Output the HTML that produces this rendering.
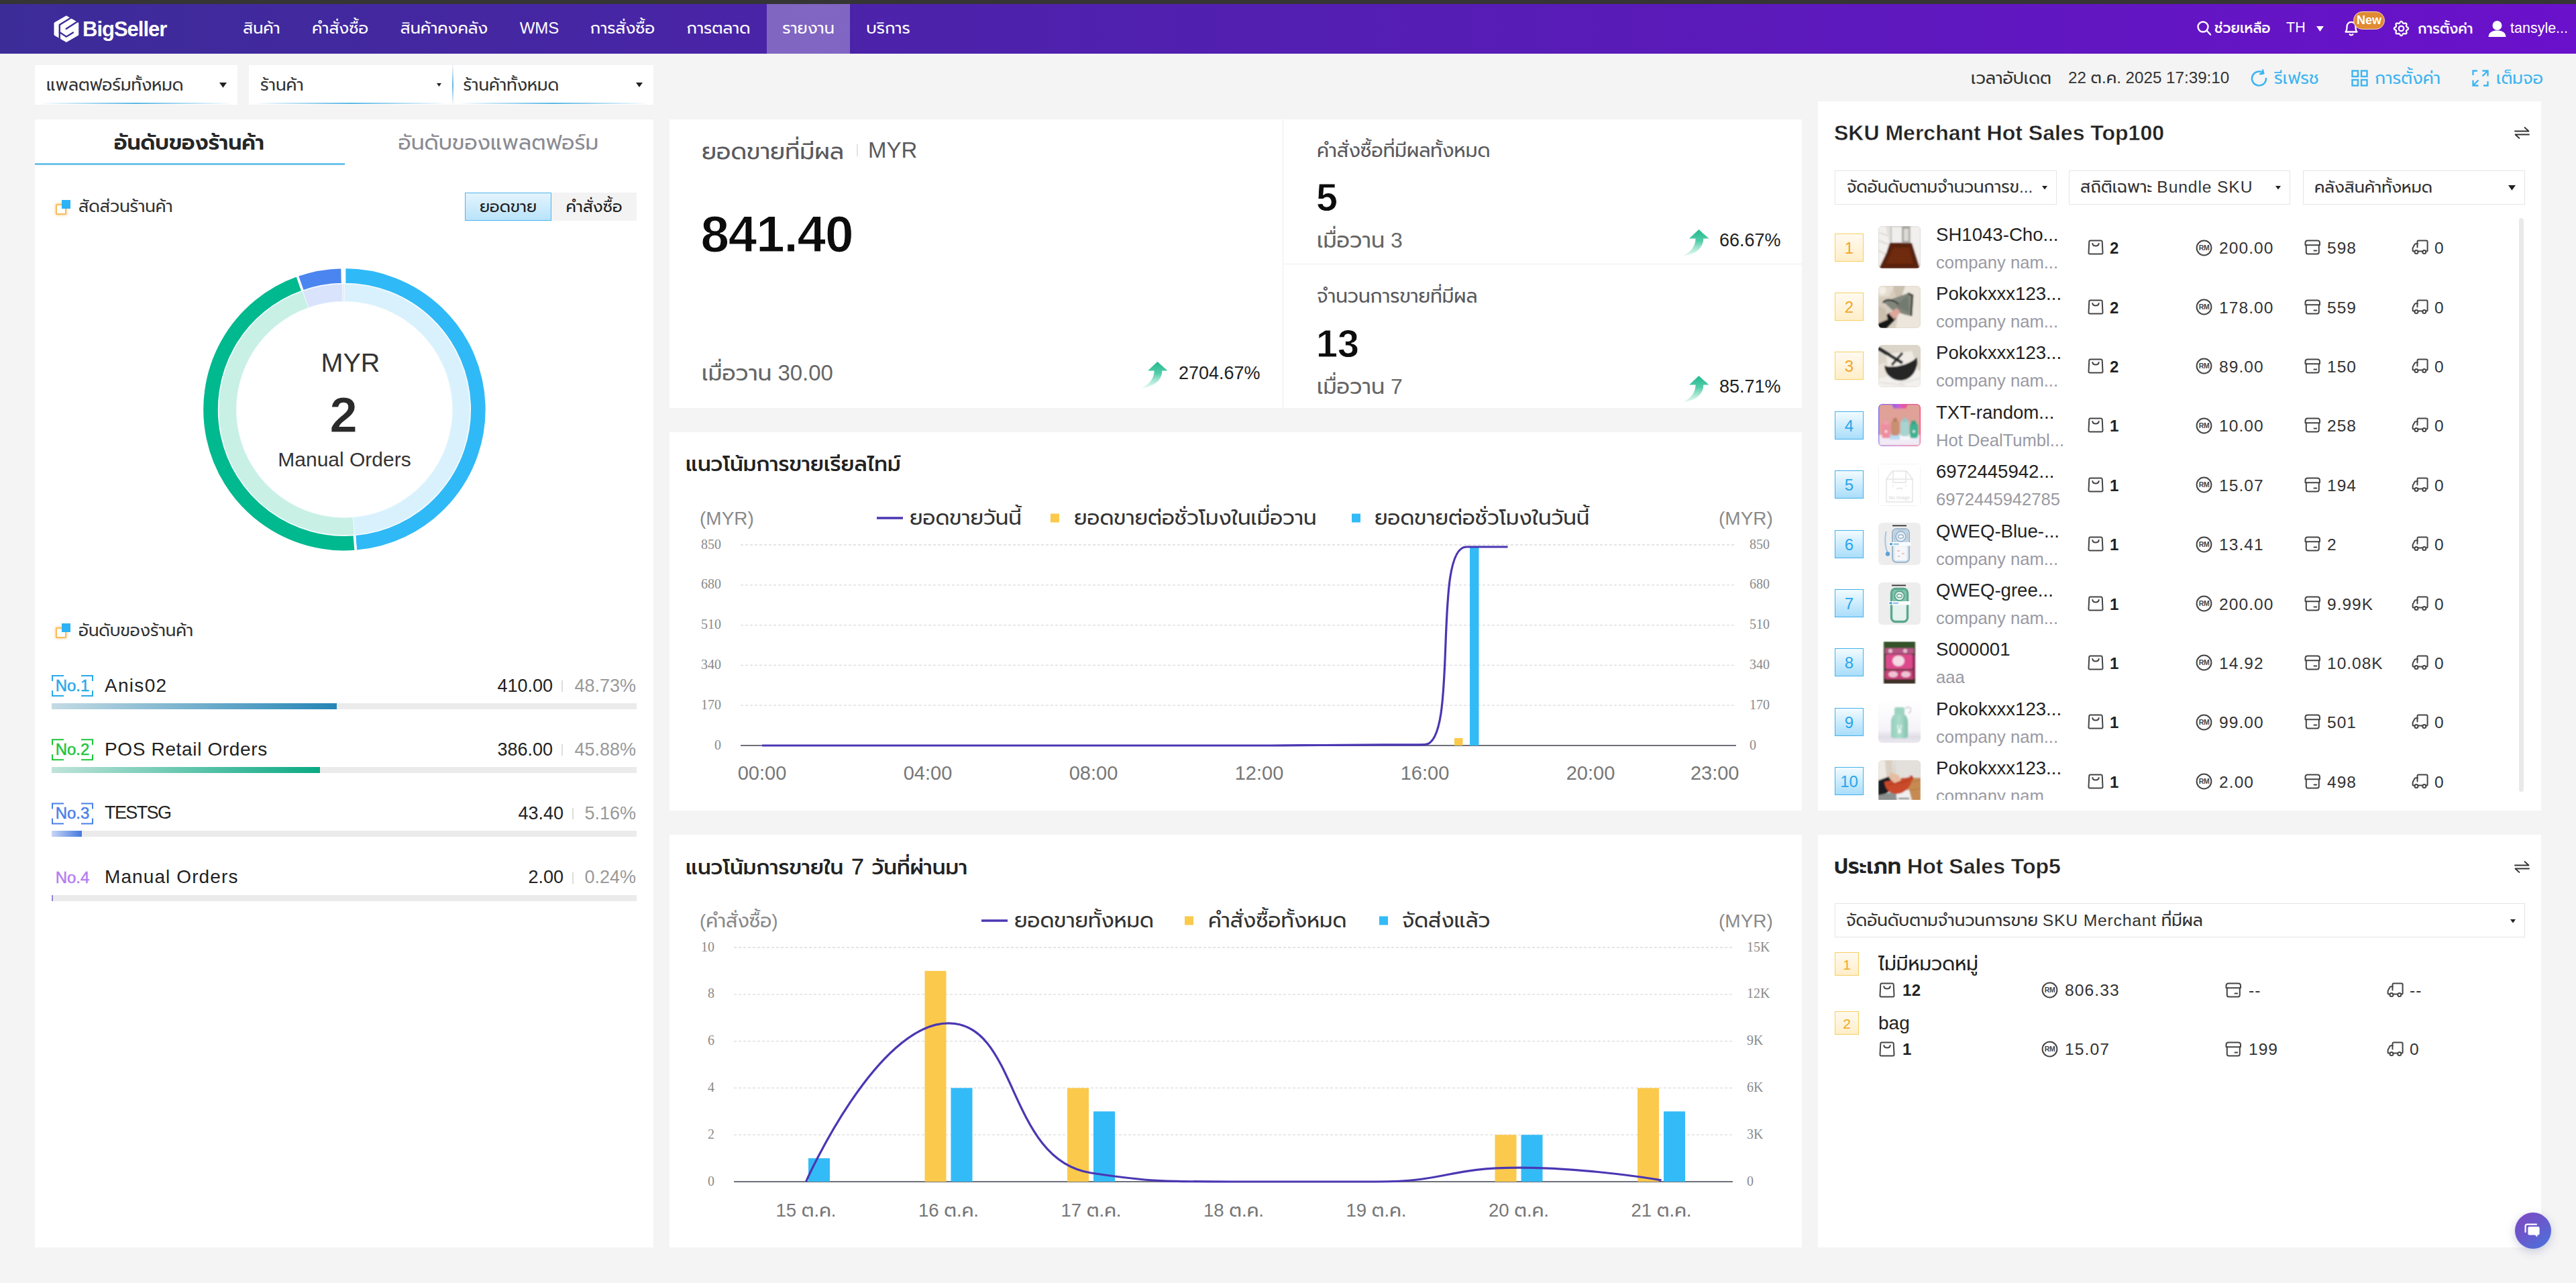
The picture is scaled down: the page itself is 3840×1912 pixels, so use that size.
<!DOCTYPE html><html lang="th"><head><meta charset="utf-8"><title>BigSeller</title><style>
*{box-sizing:border-box;margin:0;padding:0}
html,body{width:3840px;height:1912px;overflow:hidden;background:#f4f4f4}
body{position:relative;font-family:"Liberation Sans","Prompt","Kanit","Noto Sans Thai","Loma",sans-serif;color:#333}
.t{position:absolute;white-space:nowrap}
.b{position:absolute}
svg{position:absolute;overflow:visible}
.ser{font-family:"Liberation Serif","Noto Serif Thai",serif}
</style></head><body>
<div class="b" style="left:0px;top:0px;width:3840px;height:6px;background:#353535"></div>
<div class="b" style="left:0px;top:6px;width:3840px;height:74px;background:linear-gradient(90deg,#3c2c98,#6a11cb)"></div>
<div class="b" style="left:1143px;top:6px;width:124px;height:74px;background:rgba(255,255,255,.3)"></div>
<svg style="left:80px;top:22px" width="38" height="42" viewBox="0 0 38 42"><path d="M18.9 1.8 L36.8 12.1 L36.8 30.2 L18.9 40.5 L1 30.2 L1 12.1 Z" fill="#fff" stroke="#fff" stroke-width="1" stroke-linejoin="round"/><g fill="none" stroke="#3d2c99" stroke-width="2.4" stroke-linecap="round" stroke-linejoin="miter"><path d="M27 3.8 L8.8 15 L8.8 36"/><path d="M38 8.4 L18.6 20.9"/><path d="M8.8 26.1 L18.9 32.7 L29 26.4"/></g></svg>
<div class="t " style="left:123px;top:22px;font-size:31px;line-height:43px;color:#fff;font-weight:700;letter-spacing:-1px;">BigSeller</div>
<div class="t " style="left:390.0px;transform:translateX(-50%);top:25px;font-size:24px;line-height:34px;color:#fff;">สินค้า</div>
<div class="t " style="left:507.0px;transform:translateX(-50%);top:25px;font-size:24px;line-height:34px;color:#fff;">คำสั่งซื้อ</div>
<div class="t " style="left:662.0px;transform:translateX(-50%);top:25px;font-size:24px;line-height:34px;color:#fff;">สินค้าคงคลัง</div>
<div class="t " style="left:804.0px;transform:translateX(-50%);top:25px;font-size:24px;line-height:34px;color:#fff;">WMS</div>
<div class="t " style="left:928.0px;transform:translateX(-50%);top:25px;font-size:24px;line-height:34px;color:#fff;">การสั่งซื้อ</div>
<div class="t " style="left:1071.0px;transform:translateX(-50%);top:25px;font-size:24px;line-height:34px;color:#fff;">การตลาด</div>
<div class="t " style="left:1205.0px;transform:translateX(-50%);top:25px;font-size:24px;line-height:34px;color:#fff;">รายงาน</div>
<div class="t " style="left:1324.0px;transform:translateX(-50%);top:25px;font-size:24px;line-height:34px;color:#fff;">บริการ</div>
<svg style="left:3274px;top:30px" width="24" height="24" viewBox="0 0 24 24" fill="none" stroke="#fff" stroke-width="2.4" stroke-linecap="round"><circle cx="10" cy="10" r="7.5"/><path d="M16 16 L21 21.5"/></svg>
<div class="t " style="left:3301px;top:26.5px;font-size:21px;line-height:29px;color:#fff;font-weight:500;">ช่วยเหลือ</div>
<div class="t " style="left:3408px;top:26px;font-size:21.5px;line-height:30px;color:#fff;">TH</div>
<svg style="left:3453px;top:39px" width="11" height="8" viewBox="0 0 11 8"><path d="M0 0 H11 L5.5 8 Z" fill="#fff"/></svg>
<svg style="left:3493.5px;top:30px" width="22" height="24" viewBox="0 0 22 24" fill="none" stroke="#fff" stroke-width="2.3" stroke-linecap="round" stroke-linejoin="round"><path d="M2.5 17.5 C4.5 15.5 4.5 13.5 4.5 10 C4.5 5.5 7.2 2.8 11 2.8 C14.8 2.8 17.5 5.5 17.5 10 C17.5 13.5 17.5 15.5 19.5 17.5 Z"/><path d="M8.6 21.3 C9.6 22.6 12.4 22.6 13.4 21.3"/></svg>
<div class="b" style="left:3507.5px;top:17px;width:47.5px;height:27px;background:#e08a32;border:1.5px solid #f6dcc0;border-radius:14px"></div>
<div class="t " style="left:3531.5px;transform:translateX(-50%);top:17.5px;font-size:18px;line-height:25px;color:#fff;font-weight:700;">New</div>
<svg style="left:3568px;top:30.5px" width="23" height="23" viewBox="0 0 23 23" fill="none" stroke="#fff" stroke-width="2.3" stroke-linejoin="round"><path d="M11.50 0.85 L12.40 1.18 L13.17 2.03 L13.77 3.02 L14.31 3.77 L14.98 4.05 L15.89 3.90 L17.02 3.62 L18.16 3.57 L19.03 3.97 L19.43 4.84 L19.38 5.98 L19.10 7.11 L18.95 8.02 L19.23 8.69 L19.98 9.23 L20.97 9.83 L21.82 10.60 L22.15 11.50 L21.82 12.40 L20.97 13.17 L19.98 13.77 L19.23 14.31 L18.95 14.98 L19.10 15.89 L19.38 17.02 L19.43 18.16 L19.03 19.03 L18.16 19.43 L17.02 19.38 L15.89 19.10 L14.98 18.95 L14.31 19.23 L13.77 19.98 L13.17 20.97 L12.40 21.82 L11.50 22.15 L10.60 21.82 L9.83 20.97 L9.23 19.98 L8.69 19.23 L8.02 18.95 L7.11 19.10 L5.98 19.38 L4.84 19.43 L3.97 19.03 L3.57 18.16 L3.62 17.02 L3.90 15.89 L4.05 14.98 L3.77 14.31 L3.02 13.77 L2.03 13.17 L1.18 12.40 L0.85 11.50 L1.18 10.60 L2.03 9.83 L3.02 9.23 L3.77 8.69 L4.05 8.02 L3.90 7.11 L3.62 5.98 L3.57 4.84 L3.97 3.97 L4.84 3.57 L5.98 3.62 L7.11 3.90 L8.02 4.05 L8.69 3.77 L9.23 3.02 L9.83 2.03 L10.60 1.18 Z"/><circle cx="11.5" cy="11.5" r="3.7"/></svg>
<div class="t " style="left:3604px;top:27.5px;font-size:20.8px;line-height:29px;color:#fff;font-weight:500;">การตั้งค่า</div>
<svg style="left:3709px;top:30px" width="27" height="26" viewBox="0 0 27 26" fill="#fff"><circle cx="13.5" cy="8" r="7"/><path d="M0.5 25 C1 18 6 15.5 13.5 15.5 C21 15.5 26 18 26.5 25 Z"/></svg>
<div class="t " style="left:3742px;top:27px;font-size:21.5px;line-height:30px;color:#fff;">tansyle...</div>
<div class="b" style="left:52px;top:97px;width:302px;height:59px;background:#fff"></div>
<div class="b" style="left:60px;top:152.6px;width:286px;height:2.4px;background:linear-gradient(90deg,rgba(60,170,225,0),rgba(60,170,225,.85) 50%,rgba(60,170,225,0));border-radius:2px"></div>
<div class="t " style="left:69px;top:108.5px;font-size:24.7px;line-height:35px;color:#333;">แพลตฟอร์มทั้งหมด</div>
<svg style="left:327px;top:122.7px" width="11" height="7.7" viewBox="0 0 10 7"><path d="M0 0 H10 L5 7 Z" fill="#222"/></svg>
<div class="b" style="left:371px;top:97px;width:303px;height:59px;background:#fff"></div>
<div class="b" style="left:379px;top:152.6px;width:287px;height:2.4px;background:linear-gradient(90deg,rgba(60,170,225,0),rgba(60,170,225,.85) 50%,rgba(60,170,225,0));border-radius:2px"></div>
<div class="t " style="left:388px;top:108.5px;font-size:24.7px;line-height:35px;color:#333;">ร้านค้า</div>
<svg style="left:651px;top:123.9px" width="7" height="4.9" viewBox="0 0 10 7"><path d="M0 0 H10 L5 7 Z" fill="#222"/></svg>
<div class="b" style="left:676px;top:97px;width:298px;height:59px;background:#fff"></div>
<div class="b" style="left:684px;top:152.6px;width:282px;height:2.4px;background:linear-gradient(90deg,rgba(60,170,225,0),rgba(60,170,225,.85) 50%,rgba(60,170,225,0));border-radius:2px"></div>
<div class="t " style="left:690.5px;top:108.5px;font-size:24.7px;line-height:35px;color:#333;">ร้านค้าทั้งหมด</div>
<svg style="left:948px;top:123px" width="10" height="7" viewBox="0 0 10 7"><path d="M0 0 H10 L5 7 Z" fill="#222"/></svg>
<div class="b" style="left:674px;top:100px;width:2px;height:54px;background:linear-gradient(180deg,rgba(60,170,225,0),rgba(60,170,225,.8) 50%,rgba(60,170,225,0))"></div>
<div class="t " style="left:2938px;top:98.5px;font-size:25px;line-height:35px;color:#333;">เวลาอัปเดต</div>
<div class="t " style="left:3083px;top:99px;font-size:24.2px;line-height:34px;color:#333;">22 ต.ค. 2025 17:39:10</div>
<svg style="left:3354px;top:103px" width="28" height="28" viewBox="0 0 28 28" fill="none" stroke="#3db4f0" stroke-width="2.6" stroke-linecap="round" stroke-linejoin="round"><path d="M24 14 A10.5 10.5 0 1 1 19.5 5.4"/><path d="M19 1.5 L20.2 6.4 L15.2 7.2" /></svg>
<div class="t " style="left:3390px;top:98.5px;font-size:25px;line-height:35px;color:#3db4f0;">รีเฟรช</div>
<svg style="left:3505px;top:104px" width="25" height="25" viewBox="0 0 25 25" fill="none" stroke="#3db4f0" stroke-width="2.4"><rect x="1.5" y="1.5" width="8.5" height="8.5"/><rect x="15" y="1.5" width="8.5" height="8.5"/><rect x="1.5" y="15" width="8.5" height="8.5"/><rect x="15" y="15" width="8.5" height="8.5"/></svg>
<div class="t " style="left:3540px;top:98.5px;font-size:25px;line-height:35px;color:#3db4f0;">การตั้งค่า</div>
<svg style="left:3685px;top:104px" width="25" height="25" viewBox="0 0 25 25" fill="none" stroke="#3db4f0" stroke-width="2.3" stroke-linecap="butt" stroke-linejoin="miter"><path d="M1.5 8 V1.5 H8"/><path d="M23.5 17 V23.5 H17"/><path d="M15.5 1.5 H23.5 V9.5 M23 2 L15.5 9.5"/><path d="M9.5 23.5 H1.5 V15.5 M2 23 L9.5 15.5"/></svg>
<div class="t " style="left:3721px;top:98.5px;font-size:25px;line-height:35px;color:#3db4f0;">เต็มจอ</div>
<div class="b" style="left:52px;top:178px;width:922px;height:1680.5px;background:#fff"></div>
<div class="t " style="left:282px;transform:translateX(-50%);top:190px;font-size:31.5px;line-height:44px;color:#262626;font-weight:600;">อันดับของร้านค้า</div>
<div class="t " style="left:743px;transform:translateX(-50%);top:190px;font-size:31.5px;line-height:44px;color:#8b8b93;">อันดับของแพลตฟอร์ม</div>
<div class="b" style="left:52px;top:242.5px;width:462px;height:3px;background:#6ec3ea"></div>
<div class="b" style="left:83px;top:304px;width:16px;height:16px;border:2px solid #f8bd5e;border-radius:1px;box-shadow:0 0 4px rgba(250,170,60,.75)"></div>
<div class="b" style="left:92px;top:298px;width:13px;height:13px;background:#2db2f5"></div>
<div class="t " style="left:117px;top:291px;font-size:24.5px;line-height:34px;color:#333;">สัดส่วนร้านค้า</div>
<div class="b" style="left:693px;top:287px;width:129px;height:42px;background:linear-gradient(180deg,#e4f4fd,#b9e3fa);border:1.5px solid #4bb5ec"></div>
<div class="t " style="left:757.5px;transform:translateX(-50%);top:291px;font-size:24px;line-height:34px;color:#222;">ยอดขาย</div>
<div class="b" style="left:822px;top:287px;width:127px;height:42px;background:#f3f3f3"></div>
<div class="t " style="left:885.5px;transform:translateX(-50%);top:291px;font-size:24px;line-height:34px;color:#222;">คำสั่งซื้อ</div>
<svg style="left:0;top:0" width="3840" height="1912"><path d="M513.40 398.30 A212 212 0 0 1 530.29 821.63 L528.28 796.51 A186.8 186.8 0 0 0 513.40 423.50 Z" fill="#30b9f7" stroke="#fff" stroke-width="3.6" stroke-linejoin="miter"/><path d="M530.29 821.63 A212 212 0 0 1 442.98 410.34 L451.35 434.11 A186.8 186.8 0 0 0 528.28 796.51 Z" fill="#00b98f" stroke="#fff" stroke-width="3.6" stroke-linejoin="miter"/><path d="M442.98 410.34 A212 212 0 0 1 510.33 398.32 L510.69 423.52 A186.8 186.8 0 0 0 451.35 434.11 Z" fill="#4b86f0" stroke="#fff" stroke-width="3.6" stroke-linejoin="miter"/><path d="M510.33 398.32 A212 212 0 0 1 513.40 398.30 L513.40 423.50 A186.8 186.8 0 0 0 510.69 423.52 Z" fill="#b58af5" stroke="#fff" stroke-width="3.6" stroke-linejoin="miter"/><path d="M513.40 422.90 A187.4 187.4 0 0 1 528.33 797.10 L526.23 770.79 A161 161 0 0 0 513.40 449.30 Z" fill="#d8f1fd" stroke="#f1fafe" stroke-width="1"/><path d="M528.33 797.10 A187.4 187.4 0 0 1 451.15 433.54 L459.92 458.44 A161 161 0 0 0 526.23 770.79 Z" fill="#c8f0e5" stroke="#f1fafe" stroke-width="1"/><path d="M451.15 433.54 A187.4 187.4 0 0 1 510.69 422.92 L511.07 449.32 A161 161 0 0 0 459.92 458.44 Z" fill="#d9e3fc" stroke="#f1fafe" stroke-width="1"/><path d="M510.69 422.92 A187.4 187.4 0 0 1 513.40 422.90 L513.40 449.30 A161 161 0 0 0 511.07 449.32 Z" fill="#eee4fd" stroke="#f1fafe" stroke-width="1"/></svg>
<div class="t " style="left:522.5px;transform:translateX(-50%);top:512.5px;font-size:39.5px;line-height:55px;color:#333;">MYR</div>
<div class="t " style="left:512px;transform:translateX(-50%);top:565.5px;font-size:75px;line-height:105px;color:#2a2a2a;font-weight:700;-webkit-text-stroke:1px #fff;">2</div>
<div class="t " style="left:513.5px;transform:translateX(-50%);top:664px;font-size:30px;line-height:42px;color:#333;">Manual Orders</div>
<div class="b" style="left:83px;top:935px;width:16px;height:16px;border:2px solid #f8bd5e;border-radius:1px;box-shadow:0 0 4px rgba(250,170,60,.75)"></div>
<div class="b" style="left:92px;top:929px;width:13px;height:13px;background:#2db2f5"></div>
<div class="t " style="left:117px;top:923px;font-size:24.5px;line-height:34px;color:#333;">อันดับของร้านค้า</div>
<svg style="left:0;top:0" width="3840" height="1912"><path d="M78 1015.0 V1007.0 H95 M121 1007.0 H138 V1015.0 M138 1029.0 V1037.0 H121 M95 1037.0 H78 V1029.0" fill="none" stroke="#29a9ea" stroke-width="2"/></svg>
<div class="t " style="left:108px;transform:translateX(-50%);top:1005px;font-size:24px;line-height:34px;color:#29a9ea;-webkit-text-stroke:.5px #29a9ea;">No.1</div>
<div class="t " style="left:156px;top:1001.5px;font-size:28px;line-height:39px;color:#222;letter-spacing:1.3px;">Anis02</div>
<div class="t " style="right:2892px;top:1002.5px;font-size:27px;line-height:38px;color:#999;">48.73%</div>
<div class="b" style="left:837px;top:1014.0px;width:2px;height:17px;background:#ddd"></div>
<div class="t " style="right:3016px;top:1002.5px;font-size:27px;line-height:38px;color:#222;">410.00</div>
<div class="b" style="left:77px;top:1048px;width:872px;height:9px;background:#ebebeb"></div>
<div class="b" style="left:77px;top:1048px;width:425px;height:9px;background:linear-gradient(90deg,#c4dbe4,#2585b6)"></div>
<svg style="left:0;top:0" width="3840" height="1912"><path d="M78 1110.2 V1102.2 H95 M121 1102.2 H138 V1110.2 M138 1124.2 V1132.2 H121 M95 1132.2 H78 V1124.2" fill="none" stroke="#1ec53a" stroke-width="2"/></svg>
<div class="t " style="left:108px;transform:translateX(-50%);top:1100.2px;font-size:24px;line-height:34px;color:#1ec53a;-webkit-text-stroke:.5px #1ec53a;">No.2</div>
<div class="t " style="left:156px;top:1096.7px;font-size:28px;line-height:39px;color:#222;letter-spacing:0.65px;">POS Retail Orders</div>
<div class="t " style="right:2892px;top:1097.7px;font-size:27px;line-height:38px;color:#999;">45.88%</div>
<div class="b" style="left:837px;top:1109.2px;width:2px;height:17px;background:#ddd"></div>
<div class="t " style="right:3016px;top:1097.7px;font-size:27px;line-height:38px;color:#222;">386.00</div>
<div class="b" style="left:77px;top:1143px;width:872px;height:9px;background:#ebebeb"></div>
<div class="b" style="left:77px;top:1143px;width:400px;height:9px;background:linear-gradient(90deg,#bfe3d9,#0aa983)"></div>
<svg style="left:0;top:0" width="3840" height="1912"><path d="M78 1205.4 V1197.4 H95 M121 1197.4 H138 V1205.4 M138 1219.4 V1227.4 H121 M95 1227.4 H78 V1219.4" fill="none" stroke="#4a80e8" stroke-width="2"/></svg>
<div class="t " style="left:108px;transform:translateX(-50%);top:1195.4px;font-size:24px;line-height:34px;color:#4a80e8;-webkit-text-stroke:.5px #4a80e8;">No.3</div>
<div class="t " style="left:156px;top:1192.4px;font-size:27px;line-height:38px;color:#222;letter-spacing:-1.6px;">TESTSG</div>
<div class="t " style="right:2892px;top:1192.9px;font-size:27px;line-height:38px;color:#999;">5.16%</div>
<div class="b" style="left:853px;top:1204.4px;width:2px;height:17px;background:#ddd"></div>
<div class="t " style="right:3000px;top:1192.9px;font-size:27px;line-height:38px;color:#222;">43.40</div>
<div class="b" style="left:77px;top:1238px;width:872px;height:9px;background:#ebebeb"></div>
<div class="b" style="left:77px;top:1238px;width:45px;height:9px;background:linear-gradient(90deg,#c9d6f6,#4379de)"></div>
<div class="t " style="left:108px;transform:translateX(-50%);top:1290.6px;font-size:24px;line-height:34px;color:#b57df2;-webkit-text-stroke:.5px #b57df2;">No.4</div>
<div class="t " style="left:156px;top:1287.1px;font-size:28px;line-height:39px;color:#222;letter-spacing:1.1px;">Manual Orders</div>
<div class="t " style="right:2892px;top:1288.1px;font-size:27px;line-height:38px;color:#999;">0.24%</div>
<div class="b" style="left:853px;top:1299.6px;width:2px;height:17px;background:#ddd"></div>
<div class="t " style="right:3000px;top:1288.1px;font-size:27px;line-height:38px;color:#222;">2.00</div>
<div class="b" style="left:77px;top:1334px;width:872px;height:9px;background:#ebebeb"></div>
<div class="b" style="left:77px;top:1334px;width:1.5px;height:9px;background:#8f86d8"></div>
<div class="b" style="left:998px;top:178px;width:913px;height:430px;background:#fff"></div>
<div class="b" style="left:1914px;top:178px;width:772px;height:214px;background:#fff"></div>
<div class="b" style="left:1914px;top:395px;width:772px;height:213px;background:#fff"></div>
<div class="b" style="left:1911px;top:178px;width:3px;height:430px;background:#f8f8f8"></div>
<div class="b" style="left:1914px;top:392px;width:772px;height:3px;background:#f8f8f8"></div>
<div class="t " style="left:1046px;top:199.5px;font-size:35px;line-height:49px;color:#5a5a5e;">ยอดขายที่มีผล</div>
<div class="b" style="left:1277px;top:215px;width:2px;height:18px;background:#e3e3e3"></div>
<div class="t " style="left:1294px;top:201px;font-size:33px;line-height:46px;color:#5a5a5e;">MYR</div>
<div class="t " style="left:1044.5px;top:295px;font-size:76.5px;line-height:107px;color:#0c0c0c;font-weight:700;letter-spacing:-1.2px;-webkit-text-stroke:1.1px #fff;">841.40</div>
<div class="t " style="left:1046px;top:533px;font-size:33px;line-height:46px;color:#666;">เมื่อวาน 30.00</div>
<svg style="left:1703px;top:539px" width="42" height="42" viewBox="0 0 42 42"><defs><linearGradient id="ga" x1="0" y1="0" x2="0" y2="1"><stop offset="0" stop-color="#22b98f"/><stop offset=".45" stop-color="#55cdaa"/><stop offset="1" stop-color="#c9f1e4" stop-opacity=".55"/></linearGradient></defs><path d="M22.4 0 L37.5 13.6 L29.2 13.6 C29.5 27 18 37.5 -1 39.2 C10 34 17.6 25 17.6 13.6 L8 13.6 Z" fill="url(#ga)"/></svg>
<div class="t " style="left:1757px;top:537px;font-size:27px;line-height:38px;color:#222;">2704.67%</div>
<div class="t " style="left:1963px;top:204.5px;font-size:28.2px;line-height:39px;color:#5a5a5e;">คำสั่งซื้อที่มีผลทั้งหมด</div>
<div class="t " style="left:1962px;top:254px;font-size:57.5px;line-height:80px;color:#0c0c0c;font-weight:700;-webkit-text-stroke:.8px #fff;">5</div>
<div class="t " style="left:1963px;top:335.5px;font-size:32px;line-height:45px;color:#666;">เมื่อวาน 3</div>
<svg style="left:2510px;top:341.5px" width="42" height="42" viewBox="0 0 42 42"><defs><linearGradient id="gb" x1="0" y1="0" x2="0" y2="1"><stop offset="0" stop-color="#22b98f"/><stop offset=".45" stop-color="#55cdaa"/><stop offset="1" stop-color="#c9f1e4" stop-opacity=".55"/></linearGradient></defs><path d="M22.4 0 L37.5 13.6 L29.2 13.6 C29.5 27 18 37.5 -1 39.2 C10 34 17.6 25 17.6 13.6 L8 13.6 Z" fill="url(#gb)"/></svg>
<div class="t " style="left:2563px;top:339px;font-size:27px;line-height:38px;color:#222;">66.67%</div>
<div class="t " style="left:1963px;top:421.5px;font-size:28px;line-height:39px;color:#5a5a5e;">จำนวนการขายที่มีผล</div>
<div class="t " style="left:1962px;top:472px;font-size:57.5px;line-height:80px;color:#0c0c0c;font-weight:700;-webkit-text-stroke:.8px #fff;">13</div>
<div class="t " style="left:1963px;top:553.5px;font-size:32px;line-height:45px;color:#666;">เมื่อวาน 7</div>
<svg style="left:2510px;top:559.5px" width="42" height="42" viewBox="0 0 42 42"><defs><linearGradient id="gc" x1="0" y1="0" x2="0" y2="1"><stop offset="0" stop-color="#22b98f"/><stop offset=".45" stop-color="#55cdaa"/><stop offset="1" stop-color="#c9f1e4" stop-opacity=".55"/></linearGradient></defs><path d="M22.4 0 L37.5 13.6 L29.2 13.6 C29.5 27 18 37.5 -1 39.2 C10 34 17.6 25 17.6 13.6 L8 13.6 Z" fill="url(#gc)"/></svg>
<div class="t " style="left:2563px;top:557px;font-size:27px;line-height:38px;color:#222;">85.71%</div>
<div class="b" style="left:998px;top:644px;width:1688px;height:564px;background:#fff"></div>
<div class="t " style="left:1022px;top:670px;font-size:31px;line-height:43px;color:#222;font-weight:500;">แนวโน้มการขายเรียลไทม์</div>
<svg style="left:0;top:0" width="3840" height="1912"><style>.ax{font-family:'Liberation Serif','Noto Serif Thai',serif;font-size:20px;fill:#8a8a8a}.xl{font-size:29px;fill:#777}.xl2{font-size:27.6px;fill:#777}.un{font-size:28px;fill:#8a8a8a}</style><path d="M1104 812.0 H2588" stroke="#dcdcdc" stroke-width="1.3" stroke-dasharray="4 3"/><text x="1075" y="817.5" text-anchor="end" class="ax">850</text><text x="2608" y="817.5" class="ax">850</text><path d="M1104 871.8 H2588" stroke="#dcdcdc" stroke-width="1.3" stroke-dasharray="4 3"/><text x="1075" y="877.3" text-anchor="end" class="ax">680</text><text x="2608" y="877.3" class="ax">680</text><path d="M1104 931.6 H2588" stroke="#dcdcdc" stroke-width="1.3" stroke-dasharray="4 3"/><text x="1075" y="937.1" text-anchor="end" class="ax">510</text><text x="2608" y="937.1" class="ax">510</text><path d="M1104 991.4 H2588" stroke="#dcdcdc" stroke-width="1.3" stroke-dasharray="4 3"/><text x="1075" y="996.9" text-anchor="end" class="ax">340</text><text x="2608" y="996.9" class="ax">340</text><path d="M1104 1051.2 H2588" stroke="#dcdcdc" stroke-width="1.3" stroke-dasharray="4 3"/><text x="1075" y="1056.7" text-anchor="end" class="ax">170</text><text x="2608" y="1056.7" class="ax">170</text><text x="1075" y="1116.5" text-anchor="end" class="ax">0</text><text x="2608" y="1116.5" class="ax">0</text><path d="M1104 1111 H2588" stroke="#6e7079" stroke-width="2"/><text x="1043" y="782" class="un">(MYR)</text><text x="2562" y="782" class="un">(MYR)</text><path d="M1307 772 H1346" stroke="#4a37b3" stroke-width="3.5" fill="none"/><text x="1356" y="782" font-size="31" fill="#333" class="lg">ยอดขายวันนี้</text><rect x="1566" y="765.5" width="13" height="13" fill="#fbc94c"/><text x="1601" y="782" font-size="31" fill="#333" class="lg">ยอดขายต่อชั่วโมงในเมื่อวาน</text><rect x="2015" y="765.5" width="13" height="13" fill="#33bbf7"/><text x="2049" y="782" font-size="31" fill="#333" class="lg">ยอดขายต่อชั่วโมงในวันนี้</text><text x="1136.0" y="1162" text-anchor="middle" class="xl">00:00</text><text x="1383.0" y="1162" text-anchor="middle" class="xl">04:00</text><text x="1630.0" y="1162" text-anchor="middle" class="xl">08:00</text><text x="1877.0" y="1162" text-anchor="middle" class="xl">12:00</text><text x="2124.0" y="1162" text-anchor="middle" class="xl">16:00</text><text x="2371.0" y="1162" text-anchor="middle" class="xl">20:00</text><text x="2556.2" y="1162" text-anchor="middle" class="xl">23:00</text><rect x="2168" y="1100" width="12.5" height="11" fill="#fbc94c"/><rect x="2191" y="815" width="13.5" height="296" fill="#33bbf7"/><path d="M1136.0 1111.0 C1136.0 1111.0 1166.9 1111.0 1197.8 1111.0 C1228.6 1111.0 1228.6 1111.0 1259.5 1111.0 C1290.4 1111.0 1290.4 1111.0 1321.2 1111.0 C1352.1 1111.0 1352.1 1111.0 1383.0 1111.0 C1413.9 1111.0 1413.9 1111.0 1444.8 1111.0 C1475.6 1111.0 1475.6 1111.0 1506.5 1111.0 C1537.4 1111.0 1537.4 1111.0 1568.2 1111.0 C1599.1 1111.0 1599.1 1111.0 1630.0 1111.0 C1660.9 1111.0 1660.9 1111.0 1691.8 1111.0 C1722.6 1111.0 1722.6 1111.0 1753.5 1111.0 C1784.4 1111.0 1784.4 1111.0 1815.2 1111.0 C1846.1 1111.0 1846.1 1111.0 1877.0 1111.0 C1907.9 1111.0 1907.9 1110.8 1938.8 1110.6 C1969.6 1110.5 1969.6 1110.5 2000.5 1110.3 C2031.4 1110.1 2031.4 1110.1 2062.2 1109.9 C2093.1 1109.8 2113.5 1109.9 2124.0 1109.6 C2175.2 1107.9 2134.5 815.0 2185.8 815.0 C2196.3 815.0 2247.5 815.0 2247.5 815.0" fill="none" stroke="#4a37b3" stroke-width="3.2" stroke-linejoin="round"/></svg>
<div class="b" style="left:998px;top:1244px;width:1688px;height:614.5px;background:#fff"></div>
<div class="t " style="left:1022px;top:1270px;font-size:31px;line-height:43px;color:#222;font-weight:500;">แนวโน้มการขายใน <span style="margin:0 3px;font-size:34px;-webkit-text-stroke:.4px #222">7</span> วันที่ผ่านมา</div>
<svg style="left:0;top:0" width="3840" height="1912"><path d="M1094 1412.0 H2583" stroke="#dcdcdc" stroke-width="1.3" stroke-dasharray="4 3"/><text x="1065" y="1417.5" text-anchor="end" class="ax">10</text><text x="2604" y="1417.5" class="ax">15K</text><path d="M1094 1481.8 H2583" stroke="#dcdcdc" stroke-width="1.3" stroke-dasharray="4 3"/><text x="1065" y="1487.3" text-anchor="end" class="ax">8</text><text x="2604" y="1487.3" class="ax">12K</text><path d="M1094 1551.6 H2583" stroke="#dcdcdc" stroke-width="1.3" stroke-dasharray="4 3"/><text x="1065" y="1557.1" text-anchor="end" class="ax">6</text><text x="2604" y="1557.1" class="ax">9K</text><path d="M1094 1621.4 H2583" stroke="#dcdcdc" stroke-width="1.3" stroke-dasharray="4 3"/><text x="1065" y="1626.9" text-anchor="end" class="ax">4</text><text x="2604" y="1626.9" class="ax">6K</text><path d="M1094 1691.2 H2583" stroke="#dcdcdc" stroke-width="1.3" stroke-dasharray="4 3"/><text x="1065" y="1696.7" text-anchor="end" class="ax">2</text><text x="2604" y="1696.7" class="ax">3K</text><text x="1065" y="1766.5" text-anchor="end" class="ax">0</text><text x="2604" y="1766.5" class="ax">0</text><path d="M1094 1761 H2583" stroke="#6e7079" stroke-width="2"/><text x="1043" y="1382" class="un">(คำสั่งซื้อ)</text><text x="2562" y="1382" class="un">(MYR)</text><path d="M1463 1372 H1502" stroke="#4a37b3" stroke-width="3.5" fill="none"/><text x="1512" y="1382" font-size="31" fill="#333" class="lg">ยอดขายทั้งหมด</text><rect x="1766" y="1365.5" width="13" height="13" fill="#fbc94c"/><text x="1801" y="1382" font-size="31" fill="#333" class="lg">คำสั่งซื้อทั้งหมด</text><rect x="2056" y="1365.5" width="13" height="13" fill="#33bbf7"/><text x="2090" y="1382" font-size="31" fill="#333" class="lg">จัดส่งแล้ว</text><text x="1201.5" y="1813" text-anchor="middle" class="xl2">15 ต.ค.</text><rect x="1205.0" y="1726.1" width="32" height="34.9" fill="#33bbf7"/><text x="1414.0" y="1813" text-anchor="middle" class="xl2">16 ต.ค.</text><rect x="1378.5" y="1446.9" width="32" height="314.1" fill="#fbc94c"/><rect x="1417.5" y="1621.4" width="32" height="139.6" fill="#33bbf7"/><text x="1626.5" y="1813" text-anchor="middle" class="xl2">17 ต.ค.</text><rect x="1591.0" y="1621.4" width="32" height="139.6" fill="#fbc94c"/><rect x="1630.0" y="1656.3" width="32" height="104.7" fill="#33bbf7"/><text x="1839.0" y="1813" text-anchor="middle" class="xl2">18 ต.ค.</text><text x="2051.5" y="1813" text-anchor="middle" class="xl2">19 ต.ค.</text><text x="2264.0" y="1813" text-anchor="middle" class="xl2">20 ต.ค.</text><rect x="2228.5" y="1691.2" width="32" height="69.8" fill="#fbc94c"/><rect x="2267.5" y="1691.2" width="32" height="69.8" fill="#33bbf7"/><text x="2476.5" y="1813" text-anchor="middle" class="xl2">21 ต.ค.</text><rect x="2441.0" y="1621.4" width="32" height="139.6" fill="#fbc94c"/><rect x="2480.0" y="1656.3" width="32" height="104.7" fill="#33bbf7"/><path d="M1201.5 1761.0 C1201.5 1761.0 1306.1 1524.8 1414.0 1524.8 C1518.6 1524.8 1500.8 1729.1 1626.5 1748.0 C1713.3 1761.0 1732.7 1761.0 1839.0 1761.0 C1945.2 1761.0 1945.5 1761.0 2051.5 1761.0 C2158.0 1761.0 2157.7 1740.1 2264.0 1740.1 C2370.2 1740.1 2476.5 1758.9 2476.5 1758.9" fill="none" stroke="#4a37b3" stroke-width="3.2" stroke-linejoin="round"/></svg>
<div class="b" style="left:2710px;top:151px;width:1078px;height:1057px;background:#fff"></div>
<div class="t " style="left:2734px;top:175.5px;font-size:32px;line-height:45px;color:#222;font-weight:700;-webkit-text-stroke:.4px #fff;letter-spacing:0;">SKU Merchant Hot Sales Top100</div>
<svg style="left:3748px;top:189px" width="23" height="18" viewBox="0 0 23 18" fill="none" stroke="#333" stroke-width="1.8" stroke-linecap="round" stroke-linejoin="round"><path d="M1 6.5 H21.5 L15.5 1"/><path d="M22 11.5 H1.5 L7.5 17"/></svg>
<div class="b" style="left:2735px;top:253.5px;width:331px;height:51px;background:#fff;border:1.5px solid #e5e5e5"></div>
<div class="t " style="left:2753px;top:262px;font-size:24.4px;line-height:34px;color:#333;max-width:283px;overflow:hidden;">จัดอันดับตามจำนวนการข...</div>
<svg style="left:3043.5px;top:277.1px" width="8" height="5.6" viewBox="0 0 10 7"><path d="M0 0 H10 L5 7 Z" fill="#222"/></svg>
<div class="b" style="left:3084px;top:253.5px;width:330px;height:51px;background:#fff;border:1.5px solid #e5e5e5"></div>
<div class="t " style="left:3101px;top:262px;font-size:24.6px;line-height:34px;color:#333;max-width:283px;overflow:hidden;">สถิติเฉพาะ <span style="letter-spacing:.9px">Bundle SKU</span></div>
<svg style="left:3391.5px;top:277.1px" width="8" height="5.6" viewBox="0 0 10 7"><path d="M0 0 H10 L5 7 Z" fill="#222"/></svg>
<div class="b" style="left:3433px;top:253.5px;width:331px;height:51px;background:#fff;border:1.5px solid #e5e5e5"></div>
<div class="t " style="left:3450px;top:262px;font-size:24px;line-height:34px;color:#333;max-width:284px;overflow:hidden;">คลังสินค้าทั้งหมด</div>
<svg style="left:3738.5px;top:276.2px" width="11" height="7.7" viewBox="0 0 10 7"><path d="M0 0 H10 L5 7 Z" fill="#222"/></svg>
<div class="b" style="left:3755px;top:325px;width:7px;height:855px;background:#e9e9e9;border-radius:4px"></div>
<svg width="0" height="0" style="left:0;top:0"><defs><filter id="bl" x="-5%" y="-5%" width="110%" height="110%"><feGaussianBlur stdDeviation="1"/></filter></defs></svg>
<div class="b" style="left:0;top:0;width:3755px;height:1192px;overflow:hidden">
<div class="b" style="left:2735px;top:348px;width:43px;height:42px;background:linear-gradient(180deg,#fffaf0,#ffeec8);border:1.5px solid #f6cf5f"></div>
<div class="t " style="left:2756.5px;transform:translateX(-50%);top:352.5px;font-size:24px;line-height:34px;color:#f2a52a;">1</div>
<svg style="left:2800px;top:337.1px;overflow:hidden;border-radius:6px" width="63" height="63" viewBox="0 0 63 63"><rect width="63" height="63" fill="#c6c1bb"/><g filter="url(#bl)"><rect x="0" y="0" width="18" height="63" fill="#e3dfdb"/><path d="M0 0 H11 L17 28 L7 63 H0Z" fill="#f3f1ee"/><path d="M2 10 L14 14 M1 22 L15 27 M0 36 L11 42" stroke="#d3cfcb" stroke-width="1.5"/><rect x="20" y="1" width="15" height="23" fill="#f1efed"/><rect x="35" y="0" width="12" height="25" fill="#aaa7a2"/><rect x="38" y="4" width="7" height="18" fill="#dcdad6"/><rect x="48" y="0" width="15" height="63" fill="#f2f0ee"/><path d="M17 25 H50 L62 63 H1 L12 40 Z" fill="#5a210d"/><path d="M22 32 H46 L52 56 H12 Z" fill="#6f2a11"/></g></svg>
<div class="t " style="left:2886px;top:329.6px;font-size:27.6px;line-height:39px;color:#222;">SH1043-Cho...</div>
<div class="t " style="left:2886px;top:372.6px;font-size:25.6px;line-height:36px;color:#9a9aa3;">company nam...</div>
<svg style="left:3112px;top:357.1px" width="24" height="23" viewBox="0 0 24 23" fill="none" stroke="#444" stroke-width="2" stroke-linecap="round" stroke-linejoin="round"><path d="M4 1.4 H20 Q21.6 1.4 21.7 3 L22.5 19.5 Q22.6 21.4 20.6 21.4 H3.4 Q1.4 21.4 1.5 19.5 L2.3 3 Q2.4 1.4 4 1.4 Z"/><path d="M7.3 6 C8 10.6 16 10.6 16.7 6"/></svg>
<div class="t " style="left:3145px;top:353.1px;font-size:24px;line-height:34px;color:#222;font-weight:700;">2</div>
<svg style="left:3272.5px;top:356.6px" width="25" height="25" viewBox="0 0 25 25"><circle cx="12.5" cy="12.5" r="10.9" fill="none" stroke="#444" stroke-width="2"/><text x="12.5" y="16.2" text-anchor="middle" font-size="10.5" font-weight="700" fill="#444" letter-spacing="-.4">RM</text></svg>
<div class="t " style="left:3308px;top:353.1px;font-size:24.5px;line-height:34px;color:#333;letter-spacing:1.1px;">200.00</div>
<svg style="left:3434.5px;top:357.1px" width="25" height="23" viewBox="0 0 25 23" fill="none" stroke="#444" stroke-width="2" stroke-linecap="round" stroke-linejoin="round"><path d="M1.5 8.2 V5 Q1.5 1.4 5 1.4 H19.5 Q23 1.4 23 5 V8.2 Z"/><path d="M2.8 8.4 V18.8 Q2.8 21.4 5.4 21.4 H19.2 Q21.8 21.4 21.8 18.8 V8.4"/><path d="M14.5 16.6 H18.2"/></svg>
<div class="t " style="left:3469px;top:353.1px;font-size:24.5px;line-height:34px;color:#333;letter-spacing:1px;">598</div>
<svg style="left:3594.5px;top:357.1px" width="26" height="23" viewBox="0 0 26 23" fill="none" stroke="#444" stroke-width="2" stroke-linecap="round" stroke-linejoin="round"><path d="M8.5 6.2 V3.4 Q8.5 1.6 10.3 1.6 H21.8 Q23.6 1.6 23.6 3.4 V16.4 Q23.6 17.6 22.4 17.6 H21.6"/><path d="M16 17.6 H9.6"/><path d="M8.5 6.2 H6 Q5 6.2 4.5 7.2 L2.2 11.6 Q1.6 12.6 1.6 13.6 V16.4 Q1.6 17.6 2.8 17.6 H4.4"/><path d="M8.5 6.2 V11.4"/><circle cx="7" cy="18.4" r="2.5"/><circle cx="18.8" cy="18.4" r="2.5"/></svg>
<div class="t " style="left:3629px;top:353.1px;font-size:24.5px;line-height:34px;color:#333;">0</div>
<div class="b" style="left:2735px;top:436px;width:43px;height:42px;background:linear-gradient(180deg,#fffaf0,#ffeec8);border:1.5px solid #f6cf5f"></div>
<div class="t " style="left:2756.5px;transform:translateX(-50%);top:440.5px;font-size:24px;line-height:34px;color:#f2a52a;">2</div>
<svg style="left:2800px;top:425.5px;overflow:hidden;border-radius:6px" width="63" height="63" viewBox="0 0 63 63"><rect width="63" height="63" fill="#d7cdbf"/><g filter="url(#bl)"><path d="M36 0 H63 V63 H26 Z" fill="#ece6dd"/><path d="M0 0 H24 L16 16 H0Z" fill="#e4dccf"/><circle cx="6" cy="7" r="6" fill="#f3eee6"/><path d="M22 0 L40 0 L34 18 L26 16 Z" fill="#cbbfae"/><path d="M8 24 L44 11 L51 15 L49 45 L40 43 L22 37 Z" fill="#81867b"/><path d="M26 30 L44 14 L46 40 Z" fill="#747a6f"/><path d="M7 25 C14 18 24 22 30 27" stroke="#2b2c2a" stroke-width="2.2" fill="none"/><path d="M44 11 L51 14 L49 45" stroke="#34352f" stroke-width="2.6" fill="none"/><path d="M0 50 L18 40 L27 48 L12 63 H0Z" fill="#161618"/><path d="M16 42 L27 33 L33 39 L24 50Z" fill="#dea599"/><path d="M0 30 L10 34 L14 50 L0 56 Z" fill="#cbbfae"/></g></svg>
<div class="t " style="left:2886px;top:418px;font-size:27.6px;line-height:39px;color:#222;">Pokokxxx123...</div>
<div class="t " style="left:2886px;top:461px;font-size:25.6px;line-height:36px;color:#9a9aa3;">company nam...</div>
<svg style="left:3112px;top:445.5px" width="24" height="23" viewBox="0 0 24 23" fill="none" stroke="#444" stroke-width="2" stroke-linecap="round" stroke-linejoin="round"><path d="M4 1.4 H20 Q21.6 1.4 21.7 3 L22.5 19.5 Q22.6 21.4 20.6 21.4 H3.4 Q1.4 21.4 1.5 19.5 L2.3 3 Q2.4 1.4 4 1.4 Z"/><path d="M7.3 6 C8 10.6 16 10.6 16.7 6"/></svg>
<div class="t " style="left:3145px;top:441.5px;font-size:24px;line-height:34px;color:#222;font-weight:700;">2</div>
<svg style="left:3272.5px;top:445.0px" width="25" height="25" viewBox="0 0 25 25"><circle cx="12.5" cy="12.5" r="10.9" fill="none" stroke="#444" stroke-width="2"/><text x="12.5" y="16.2" text-anchor="middle" font-size="10.5" font-weight="700" fill="#444" letter-spacing="-.4">RM</text></svg>
<div class="t " style="left:3308px;top:441.5px;font-size:24.5px;line-height:34px;color:#333;letter-spacing:1.1px;">178.00</div>
<svg style="left:3434.5px;top:445.5px" width="25" height="23" viewBox="0 0 25 23" fill="none" stroke="#444" stroke-width="2" stroke-linecap="round" stroke-linejoin="round"><path d="M1.5 8.2 V5 Q1.5 1.4 5 1.4 H19.5 Q23 1.4 23 5 V8.2 Z"/><path d="M2.8 8.4 V18.8 Q2.8 21.4 5.4 21.4 H19.2 Q21.8 21.4 21.8 18.8 V8.4"/><path d="M14.5 16.6 H18.2"/></svg>
<div class="t " style="left:3469px;top:441.5px;font-size:24.5px;line-height:34px;color:#333;letter-spacing:1px;">559</div>
<svg style="left:3594.5px;top:445.5px" width="26" height="23" viewBox="0 0 26 23" fill="none" stroke="#444" stroke-width="2" stroke-linecap="round" stroke-linejoin="round"><path d="M8.5 6.2 V3.4 Q8.5 1.6 10.3 1.6 H21.8 Q23.6 1.6 23.6 3.4 V16.4 Q23.6 17.6 22.4 17.6 H21.6"/><path d="M16 17.6 H9.6"/><path d="M8.5 6.2 H6 Q5 6.2 4.5 7.2 L2.2 11.6 Q1.6 12.6 1.6 13.6 V16.4 Q1.6 17.6 2.8 17.6 H4.4"/><path d="M8.5 6.2 V11.4"/><circle cx="7" cy="18.4" r="2.5"/><circle cx="18.8" cy="18.4" r="2.5"/></svg>
<div class="t " style="left:3629px;top:441.5px;font-size:24.5px;line-height:34px;color:#333;">0</div>
<div class="b" style="left:2735px;top:524px;width:43px;height:42px;background:linear-gradient(180deg,#fffaf0,#ffeec8);border:1.5px solid #f6cf5f"></div>
<div class="t " style="left:2756.5px;transform:translateX(-50%);top:528.5px;font-size:24px;line-height:34px;color:#f2a52a;">3</div>
<svg style="left:2800px;top:513.9px;overflow:hidden;border-radius:6px" width="63" height="63" viewBox="0 0 63 63"><rect width="63" height="63" fill="#dcd5ca"/><g filter="url(#bl)"><path d="M12 14 L50 9 L60 40 L14 46Z" fill="#f0ece5"/><path d="M0 46 L63 38 V63 H0Z" fill="#f3f1ee"/><path d="M0 30 L10 26 L14 48 L0 50Z" fill="#e9e3d9"/><path d="M9 31 C20 35 44 31 57 19 C61 36 49 55 30 53 C18 51 10 43 9 31Z" fill="#252528"/><path d="M0 5 L36 27" stroke="#252528" stroke-width="4.5" fill="none"/><path d="M36 12 L20 30" stroke="#2c2c2f" stroke-width="3.5" fill="none"/><path d="M2 56 L40 60 M30 58 L62 50" stroke="#e1ddd7" stroke-width="1.5"/></g></svg>
<div class="t " style="left:2886px;top:506.4px;font-size:27.6px;line-height:39px;color:#222;">Pokokxxx123...</div>
<div class="t " style="left:2886px;top:549.4px;font-size:25.6px;line-height:36px;color:#9a9aa3;">company nam...</div>
<svg style="left:3112px;top:533.9000000000001px" width="24" height="23" viewBox="0 0 24 23" fill="none" stroke="#444" stroke-width="2" stroke-linecap="round" stroke-linejoin="round"><path d="M4 1.4 H20 Q21.6 1.4 21.7 3 L22.5 19.5 Q22.6 21.4 20.6 21.4 H3.4 Q1.4 21.4 1.5 19.5 L2.3 3 Q2.4 1.4 4 1.4 Z"/><path d="M7.3 6 C8 10.6 16 10.6 16.7 6"/></svg>
<div class="t " style="left:3145px;top:529.9px;font-size:24px;line-height:34px;color:#222;font-weight:700;">2</div>
<svg style="left:3272.5px;top:533.4000000000001px" width="25" height="25" viewBox="0 0 25 25"><circle cx="12.5" cy="12.5" r="10.9" fill="none" stroke="#444" stroke-width="2"/><text x="12.5" y="16.2" text-anchor="middle" font-size="10.5" font-weight="700" fill="#444" letter-spacing="-.4">RM</text></svg>
<div class="t " style="left:3308px;top:529.9px;font-size:24.5px;line-height:34px;color:#333;letter-spacing:1.1px;">89.00</div>
<svg style="left:3434.5px;top:533.9000000000001px" width="25" height="23" viewBox="0 0 25 23" fill="none" stroke="#444" stroke-width="2" stroke-linecap="round" stroke-linejoin="round"><path d="M1.5 8.2 V5 Q1.5 1.4 5 1.4 H19.5 Q23 1.4 23 5 V8.2 Z"/><path d="M2.8 8.4 V18.8 Q2.8 21.4 5.4 21.4 H19.2 Q21.8 21.4 21.8 18.8 V8.4"/><path d="M14.5 16.6 H18.2"/></svg>
<div class="t " style="left:3469px;top:529.9px;font-size:24.5px;line-height:34px;color:#333;letter-spacing:1px;">150</div>
<svg style="left:3594.5px;top:533.9000000000001px" width="26" height="23" viewBox="0 0 26 23" fill="none" stroke="#444" stroke-width="2" stroke-linecap="round" stroke-linejoin="round"><path d="M8.5 6.2 V3.4 Q8.5 1.6 10.3 1.6 H21.8 Q23.6 1.6 23.6 3.4 V16.4 Q23.6 17.6 22.4 17.6 H21.6"/><path d="M16 17.6 H9.6"/><path d="M8.5 6.2 H6 Q5 6.2 4.5 7.2 L2.2 11.6 Q1.6 12.6 1.6 13.6 V16.4 Q1.6 17.6 2.8 17.6 H4.4"/><path d="M8.5 6.2 V11.4"/><circle cx="7" cy="18.4" r="2.5"/><circle cx="18.8" cy="18.4" r="2.5"/></svg>
<div class="t " style="left:3629px;top:529.9px;font-size:24.5px;line-height:34px;color:#333;">0</div>
<div class="b" style="left:2735px;top:613px;width:43px;height:42px;background:linear-gradient(180deg,#f2fbff,#a9ddfa);border:1.5px solid #43b0ea"></div>
<div class="t " style="left:2756.5px;transform:translateX(-50%);top:617.5px;font-size:24px;line-height:34px;color:#2aa5ea;">4</div>
<svg style="left:2800px;top:602.3px;overflow:hidden;border-radius:6px" width="63" height="63" viewBox="0 0 63 63"><defs><linearGradient id="t4" x1="0" y1="0" x2="1" y2="0"><stop offset="0" stop-color="#7d6be8"/><stop offset=".5" stop-color="#d65ad0"/><stop offset="1" stop-color="#ef4f7b"/></linearGradient></defs><rect width="63" height="63" fill="url(#t4)"/><rect x="1.3" y="1.3" width="60.4" height="60.4" rx="4.5" fill="#dfa198"/><g filter="url(#bl)"><rect x="1.3" y="46" width="60.4" height="15.7" fill="#f0ebf6"/><path d="M20 0 H44 L41 6.5 H23 Z" fill="url(#t4)"/><rect x="17" y="44" width="15" height="9" fill="#b7dcf2"/><rect x="32" y="45" width="15" height="9" fill="#f7f5fa"/><rect x="5" y="29" width="13" height="22" rx="4" fill="#ef8da0"/><rect x="8" y="25" width="7" height="6" rx="2" fill="#f29cae"/><rect x="19" y="25" width="12" height="22" rx="3.5" fill="#c98f72"/><rect x="22" y="21" width="6" height="6" rx="2" fill="#b97f62"/><rect x="33" y="25" width="13" height="23" rx="3.5" fill="#a7d4d0"/><rect x="36" y="21" width="7" height="6" rx="2" fill="#98c8c6"/><rect x="47" y="29" width="12" height="22" rx="4" fill="#3cb393"/><rect x="49" y="25" width="7" height="6" rx="2" fill="#35a685"/><circle cx="11.5" cy="41" r="2" fill="#fbe3e8"/><circle cx="53" cy="41" r="2" fill="#d9f3ea"/></g></svg>
<div class="t " style="left:2886px;top:594.8px;font-size:27.6px;line-height:39px;color:#222;">TXT-random...</div>
<div class="t " style="left:2886px;top:637.8px;font-size:25.6px;line-height:36px;color:#9a9aa3;">Hot DealTumbl...</div>
<svg style="left:3112px;top:622.3000000000001px" width="24" height="23" viewBox="0 0 24 23" fill="none" stroke="#444" stroke-width="2" stroke-linecap="round" stroke-linejoin="round"><path d="M4 1.4 H20 Q21.6 1.4 21.7 3 L22.5 19.5 Q22.6 21.4 20.6 21.4 H3.4 Q1.4 21.4 1.5 19.5 L2.3 3 Q2.4 1.4 4 1.4 Z"/><path d="M7.3 6 C8 10.6 16 10.6 16.7 6"/></svg>
<div class="t " style="left:3145px;top:618.3px;font-size:24px;line-height:34px;color:#222;font-weight:700;">1</div>
<svg style="left:3272.5px;top:621.8000000000001px" width="25" height="25" viewBox="0 0 25 25"><circle cx="12.5" cy="12.5" r="10.9" fill="none" stroke="#444" stroke-width="2"/><text x="12.5" y="16.2" text-anchor="middle" font-size="10.5" font-weight="700" fill="#444" letter-spacing="-.4">RM</text></svg>
<div class="t " style="left:3308px;top:618.3px;font-size:24.5px;line-height:34px;color:#333;letter-spacing:1.1px;">10.00</div>
<svg style="left:3434.5px;top:622.3000000000001px" width="25" height="23" viewBox="0 0 25 23" fill="none" stroke="#444" stroke-width="2" stroke-linecap="round" stroke-linejoin="round"><path d="M1.5 8.2 V5 Q1.5 1.4 5 1.4 H19.5 Q23 1.4 23 5 V8.2 Z"/><path d="M2.8 8.4 V18.8 Q2.8 21.4 5.4 21.4 H19.2 Q21.8 21.4 21.8 18.8 V8.4"/><path d="M14.5 16.6 H18.2"/></svg>
<div class="t " style="left:3469px;top:618.3px;font-size:24.5px;line-height:34px;color:#333;letter-spacing:1px;">258</div>
<svg style="left:3594.5px;top:622.3000000000001px" width="26" height="23" viewBox="0 0 26 23" fill="none" stroke="#444" stroke-width="2" stroke-linecap="round" stroke-linejoin="round"><path d="M8.5 6.2 V3.4 Q8.5 1.6 10.3 1.6 H21.8 Q23.6 1.6 23.6 3.4 V16.4 Q23.6 17.6 22.4 17.6 H21.6"/><path d="M16 17.6 H9.6"/><path d="M8.5 6.2 H6 Q5 6.2 4.5 7.2 L2.2 11.6 Q1.6 12.6 1.6 13.6 V16.4 Q1.6 17.6 2.8 17.6 H4.4"/><path d="M8.5 6.2 V11.4"/><circle cx="7" cy="18.4" r="2.5"/><circle cx="18.8" cy="18.4" r="2.5"/></svg>
<div class="t " style="left:3629px;top:618.3px;font-size:24.5px;line-height:34px;color:#333;">0</div>
<div class="b" style="left:2735px;top:701px;width:43px;height:42px;background:linear-gradient(180deg,#f2fbff,#a9ddfa);border:1.5px solid #43b0ea"></div>
<div class="t " style="left:2756.5px;transform:translateX(-50%);top:705.5px;font-size:24px;line-height:34px;color:#2aa5ea;">5</div>
<svg style="left:2800px;top:690.7px;overflow:hidden;border-radius:6px" width="63" height="63" viewBox="0 0 63 63"><rect x=".5" y=".5" width="62" height="62" rx="3" fill="#fff" stroke="#f3f3f3"/><g fill="none" stroke="#e4e4e6" stroke-width="1.5" stroke-linejoin="round"><path d="M12 23 H51 V57 H12 Z"/><path d="M12 23 L21 11 H42 L51 23"/><path d="M22 11 V28 H41 V11"/><path d="M27 38 Q31.5 34.5 36 38"/></g><circle cx="22" cy="33" r="1" fill="#e4e4e6"/><circle cx="41" cy="33" r="1" fill="#e4e4e6"/><text x="31.5" y="52.5" text-anchor="middle" font-size="7" font-weight="700" fill="#e3e3e6">No Image</text></svg>
<div class="t " style="left:2886px;top:683.2px;font-size:27.6px;line-height:39px;color:#222;">6972445942...</div>
<div class="t " style="left:2886px;top:726.2px;font-size:25.6px;line-height:36px;color:#9a9aa3;">6972445942785</div>
<svg style="left:3112px;top:710.7px" width="24" height="23" viewBox="0 0 24 23" fill="none" stroke="#444" stroke-width="2" stroke-linecap="round" stroke-linejoin="round"><path d="M4 1.4 H20 Q21.6 1.4 21.7 3 L22.5 19.5 Q22.6 21.4 20.6 21.4 H3.4 Q1.4 21.4 1.5 19.5 L2.3 3 Q2.4 1.4 4 1.4 Z"/><path d="M7.3 6 C8 10.6 16 10.6 16.7 6"/></svg>
<div class="t " style="left:3145px;top:706.7px;font-size:24px;line-height:34px;color:#222;font-weight:700;">1</div>
<svg style="left:3272.5px;top:710.2px" width="25" height="25" viewBox="0 0 25 25"><circle cx="12.5" cy="12.5" r="10.9" fill="none" stroke="#444" stroke-width="2"/><text x="12.5" y="16.2" text-anchor="middle" font-size="10.5" font-weight="700" fill="#444" letter-spacing="-.4">RM</text></svg>
<div class="t " style="left:3308px;top:706.7px;font-size:24.5px;line-height:34px;color:#333;letter-spacing:1.1px;">15.07</div>
<svg style="left:3434.5px;top:710.7px" width="25" height="23" viewBox="0 0 25 23" fill="none" stroke="#444" stroke-width="2" stroke-linecap="round" stroke-linejoin="round"><path d="M1.5 8.2 V5 Q1.5 1.4 5 1.4 H19.5 Q23 1.4 23 5 V8.2 Z"/><path d="M2.8 8.4 V18.8 Q2.8 21.4 5.4 21.4 H19.2 Q21.8 21.4 21.8 18.8 V8.4"/><path d="M14.5 16.6 H18.2"/></svg>
<div class="t " style="left:3469px;top:706.7px;font-size:24.5px;line-height:34px;color:#333;letter-spacing:1px;">194</div>
<svg style="left:3594.5px;top:710.7px" width="26" height="23" viewBox="0 0 26 23" fill="none" stroke="#444" stroke-width="2" stroke-linecap="round" stroke-linejoin="round"><path d="M8.5 6.2 V3.4 Q8.5 1.6 10.3 1.6 H21.8 Q23.6 1.6 23.6 3.4 V16.4 Q23.6 17.6 22.4 17.6 H21.6"/><path d="M16 17.6 H9.6"/><path d="M8.5 6.2 H6 Q5 6.2 4.5 7.2 L2.2 11.6 Q1.6 12.6 1.6 13.6 V16.4 Q1.6 17.6 2.8 17.6 H4.4"/><path d="M8.5 6.2 V11.4"/><circle cx="7" cy="18.4" r="2.5"/><circle cx="18.8" cy="18.4" r="2.5"/></svg>
<div class="t " style="left:3629px;top:706.7px;font-size:24.5px;line-height:34px;color:#333;">0</div>
<div class="b" style="left:2735px;top:790px;width:43px;height:42px;background:linear-gradient(180deg,#f2fbff,#a9ddfa);border:1.5px solid #43b0ea"></div>
<div class="t " style="left:2756.5px;transform:translateX(-50%);top:794.5px;font-size:24px;line-height:34px;color:#2aa5ea;">6</div>
<svg style="left:2800px;top:779.1px;overflow:hidden;border-radius:6px" width="63" height="63" viewBox="0 0 63 63"><rect width="63" height="63" fill="#ededed"/><rect x="21" y="3.5" width="21" height="1.8" fill="#333"/><rect x="21" y="9" width="25" height="50" rx="6" fill="#d9e6f0" stroke="#9fb6c9" stroke-width="2"/><rect x="23.5" y="11" width="20" height="19" rx="5" fill="#c5d9e8" stroke="#a9bfd2" stroke-width="1"/><circle cx="33.5" cy="20.5" r="7.5" fill="#e3edf5" stroke="#93aec6" stroke-width="1.6"/><ellipse cx="33.5" cy="20.5" rx="4" ry="2.6" fill="#f4f8fb" stroke="#8ea9c2" stroke-width="1.2"/><rect x="24.5" y="35" width="18" height="21" rx="2" fill="#f5f7fa"/><path d="M28 42 h4 M35 46 h4 M29 50 h3" stroke="#e4b8a8" stroke-width="1.3"/><rect x="15.5" y="29" width="33" height="5.5" fill="#fbfcfd"/><rect x="17" y="30.3" width="4" height="3" fill="#4a9fd8"/><rect x="22.5" y="31" width="8" height="1.6" fill="#66aede"/><path d="M11.5 13 C9.5 24 10 36 13.5 44" stroke="#a9c5dd" stroke-width="2" fill="none"/><circle cx="14" cy="46.5" r="3.2" fill="#5ea3d6"/></svg>
<div class="t " style="left:2886px;top:771.6px;font-size:27.6px;line-height:39px;color:#222;">QWEQ-Blue-...</div>
<div class="t " style="left:2886px;top:814.6px;font-size:25.6px;line-height:36px;color:#9a9aa3;">company nam...</div>
<svg style="left:3112px;top:799.1px" width="24" height="23" viewBox="0 0 24 23" fill="none" stroke="#444" stroke-width="2" stroke-linecap="round" stroke-linejoin="round"><path d="M4 1.4 H20 Q21.6 1.4 21.7 3 L22.5 19.5 Q22.6 21.4 20.6 21.4 H3.4 Q1.4 21.4 1.5 19.5 L2.3 3 Q2.4 1.4 4 1.4 Z"/><path d="M7.3 6 C8 10.6 16 10.6 16.7 6"/></svg>
<div class="t " style="left:3145px;top:795.1px;font-size:24px;line-height:34px;color:#222;font-weight:700;">1</div>
<svg style="left:3272.5px;top:798.6px" width="25" height="25" viewBox="0 0 25 25"><circle cx="12.5" cy="12.5" r="10.9" fill="none" stroke="#444" stroke-width="2"/><text x="12.5" y="16.2" text-anchor="middle" font-size="10.5" font-weight="700" fill="#444" letter-spacing="-.4">RM</text></svg>
<div class="t " style="left:3308px;top:795.1px;font-size:24.5px;line-height:34px;color:#333;letter-spacing:1.1px;">13.41</div>
<svg style="left:3434.5px;top:799.1px" width="25" height="23" viewBox="0 0 25 23" fill="none" stroke="#444" stroke-width="2" stroke-linecap="round" stroke-linejoin="round"><path d="M1.5 8.2 V5 Q1.5 1.4 5 1.4 H19.5 Q23 1.4 23 5 V8.2 Z"/><path d="M2.8 8.4 V18.8 Q2.8 21.4 5.4 21.4 H19.2 Q21.8 21.4 21.8 18.8 V8.4"/><path d="M14.5 16.6 H18.2"/></svg>
<div class="t " style="left:3469px;top:795.1px;font-size:24.5px;line-height:34px;color:#333;letter-spacing:1px;">2</div>
<svg style="left:3594.5px;top:799.1px" width="26" height="23" viewBox="0 0 26 23" fill="none" stroke="#444" stroke-width="2" stroke-linecap="round" stroke-linejoin="round"><path d="M8.5 6.2 V3.4 Q8.5 1.6 10.3 1.6 H21.8 Q23.6 1.6 23.6 3.4 V16.4 Q23.6 17.6 22.4 17.6 H21.6"/><path d="M16 17.6 H9.6"/><path d="M8.5 6.2 H6 Q5 6.2 4.5 7.2 L2.2 11.6 Q1.6 12.6 1.6 13.6 V16.4 Q1.6 17.6 2.8 17.6 H4.4"/><path d="M8.5 6.2 V11.4"/><circle cx="7" cy="18.4" r="2.5"/><circle cx="18.8" cy="18.4" r="2.5"/></svg>
<div class="t " style="left:3629px;top:795.1px;font-size:24.5px;line-height:34px;color:#333;">0</div>
<div class="b" style="left:2735px;top:878px;width:43px;height:42px;background:linear-gradient(180deg,#f2fbff,#a9ddfa);border:1.5px solid #43b0ea"></div>
<div class="t " style="left:2756.5px;transform:translateX(-50%);top:882.5px;font-size:24px;line-height:34px;color:#2aa5ea;">7</div>
<svg style="left:2800px;top:867.5px;overflow:hidden;border-radius:6px" width="63" height="63" viewBox="0 0 63 63"><rect width="63" height="63" fill="#ededed"/><rect x="20" y="3.5" width="21" height="1.8" fill="#333"/><rect x="19.5" y="9.5" width="24" height="49" rx="6" fill="#e6f2ee" stroke="#5aa88f" stroke-width="3.4"/><rect x="21" y="11" width="21" height="19" rx="5" fill="#7fc1ab"/><circle cx="31.5" cy="20" r="7" fill="#d9ece5" stroke="#4f9c83" stroke-width="1.5"/><ellipse cx="31.5" cy="20" rx="3.8" ry="2.5" fill="#f1f8f5" stroke="#4f9c83" stroke-width="1.2"/><rect x="15" y="28" width="33" height="5.5" fill="#fbfcfd"/><rect x="16.5" y="29.3" width="4" height="3" fill="#4a9fd8"/><rect x="22" y="30" width="8" height="1.6" fill="#66aede"/></svg>
<div class="t " style="left:2886px;top:860px;font-size:27.6px;line-height:39px;color:#222;">QWEQ-gree...</div>
<div class="t " style="left:2886px;top:903px;font-size:25.6px;line-height:36px;color:#9a9aa3;">company nam...</div>
<svg style="left:3112px;top:887.5000000000001px" width="24" height="23" viewBox="0 0 24 23" fill="none" stroke="#444" stroke-width="2" stroke-linecap="round" stroke-linejoin="round"><path d="M4 1.4 H20 Q21.6 1.4 21.7 3 L22.5 19.5 Q22.6 21.4 20.6 21.4 H3.4 Q1.4 21.4 1.5 19.5 L2.3 3 Q2.4 1.4 4 1.4 Z"/><path d="M7.3 6 C8 10.6 16 10.6 16.7 6"/></svg>
<div class="t " style="left:3145px;top:883.5px;font-size:24px;line-height:34px;color:#222;font-weight:700;">1</div>
<svg style="left:3272.5px;top:887.0000000000001px" width="25" height="25" viewBox="0 0 25 25"><circle cx="12.5" cy="12.5" r="10.9" fill="none" stroke="#444" stroke-width="2"/><text x="12.5" y="16.2" text-anchor="middle" font-size="10.5" font-weight="700" fill="#444" letter-spacing="-.4">RM</text></svg>
<div class="t " style="left:3308px;top:883.5px;font-size:24.5px;line-height:34px;color:#333;letter-spacing:1.1px;">200.00</div>
<svg style="left:3434.5px;top:887.5000000000001px" width="25" height="23" viewBox="0 0 25 23" fill="none" stroke="#444" stroke-width="2" stroke-linecap="round" stroke-linejoin="round"><path d="M1.5 8.2 V5 Q1.5 1.4 5 1.4 H19.5 Q23 1.4 23 5 V8.2 Z"/><path d="M2.8 8.4 V18.8 Q2.8 21.4 5.4 21.4 H19.2 Q21.8 21.4 21.8 18.8 V8.4"/><path d="M14.5 16.6 H18.2"/></svg>
<div class="t " style="left:3469px;top:883.5px;font-size:24.5px;line-height:34px;color:#333;letter-spacing:1px;">9.99K</div>
<svg style="left:3594.5px;top:887.5000000000001px" width="26" height="23" viewBox="0 0 26 23" fill="none" stroke="#444" stroke-width="2" stroke-linecap="round" stroke-linejoin="round"><path d="M8.5 6.2 V3.4 Q8.5 1.6 10.3 1.6 H21.8 Q23.6 1.6 23.6 3.4 V16.4 Q23.6 17.6 22.4 17.6 H21.6"/><path d="M16 17.6 H9.6"/><path d="M8.5 6.2 H6 Q5 6.2 4.5 7.2 L2.2 11.6 Q1.6 12.6 1.6 13.6 V16.4 Q1.6 17.6 2.8 17.6 H4.4"/><path d="M8.5 6.2 V11.4"/><circle cx="7" cy="18.4" r="2.5"/><circle cx="18.8" cy="18.4" r="2.5"/></svg>
<div class="t " style="left:3629px;top:883.5px;font-size:24.5px;line-height:34px;color:#333;">0</div>
<div class="b" style="left:2735px;top:966px;width:43px;height:42px;background:linear-gradient(180deg,#f2fbff,#a9ddfa);border:1.5px solid #43b0ea"></div>
<div class="t " style="left:2756.5px;transform:translateX(-50%);top:970.5px;font-size:24px;line-height:34px;color:#2aa5ea;">8</div>
<svg style="left:2800px;top:955.9px;overflow:hidden;border-radius:6px" width="63" height="63" viewBox="0 0 63 63"><rect width="63" height="63" fill="#fff"/><g filter="url(#bl)"><rect x="8" y="0" width="47" height="63" fill="#3b3d2c"/><rect x="8" y="0" width="47" height="11" fill="#35522a"/><rect x="8" y="52" width="47" height="11" fill="#3d3328"/><rect x="10" y="10" width="43" height="8" fill="#b65486"/><rect x="11" y="19" width="40" height="22" rx="2" fill="#dc4a8c"/><rect x="10" y="43" width="43" height="13" rx="2" fill="#c9417c"/><ellipse cx="30" cy="29" rx="9" ry="8" fill="#f4dbe5"/><ellipse cx="22" cy="49" rx="7" ry="4.5" fill="#eec4d4"/><ellipse cx="41" cy="49" rx="7" ry="4.5" fill="#eec4d4"/><rect x="51" y="20" width="4" height="34" fill="#8c2a58"/><circle cx="18" cy="14" r="3" fill="#e6bfd0"/><circle cx="40" cy="14" r="3" fill="#e6bfd0"/></g></svg>
<div class="t " style="left:2886px;top:948.4px;font-size:27.6px;line-height:39px;color:#222;">S000001</div>
<div class="t " style="left:2886px;top:991.4px;font-size:25.6px;line-height:36px;color:#9a9aa3;">aaa</div>
<svg style="left:3112px;top:975.9000000000001px" width="24" height="23" viewBox="0 0 24 23" fill="none" stroke="#444" stroke-width="2" stroke-linecap="round" stroke-linejoin="round"><path d="M4 1.4 H20 Q21.6 1.4 21.7 3 L22.5 19.5 Q22.6 21.4 20.6 21.4 H3.4 Q1.4 21.4 1.5 19.5 L2.3 3 Q2.4 1.4 4 1.4 Z"/><path d="M7.3 6 C8 10.6 16 10.6 16.7 6"/></svg>
<div class="t " style="left:3145px;top:971.9px;font-size:24px;line-height:34px;color:#222;font-weight:700;">1</div>
<svg style="left:3272.5px;top:975.4000000000001px" width="25" height="25" viewBox="0 0 25 25"><circle cx="12.5" cy="12.5" r="10.9" fill="none" stroke="#444" stroke-width="2"/><text x="12.5" y="16.2" text-anchor="middle" font-size="10.5" font-weight="700" fill="#444" letter-spacing="-.4">RM</text></svg>
<div class="t " style="left:3308px;top:971.9px;font-size:24.5px;line-height:34px;color:#333;letter-spacing:1.1px;">14.92</div>
<svg style="left:3434.5px;top:975.9000000000001px" width="25" height="23" viewBox="0 0 25 23" fill="none" stroke="#444" stroke-width="2" stroke-linecap="round" stroke-linejoin="round"><path d="M1.5 8.2 V5 Q1.5 1.4 5 1.4 H19.5 Q23 1.4 23 5 V8.2 Z"/><path d="M2.8 8.4 V18.8 Q2.8 21.4 5.4 21.4 H19.2 Q21.8 21.4 21.8 18.8 V8.4"/><path d="M14.5 16.6 H18.2"/></svg>
<div class="t " style="left:3469px;top:971.9px;font-size:24.5px;line-height:34px;color:#333;letter-spacing:1px;">10.08K</div>
<svg style="left:3594.5px;top:975.9000000000001px" width="26" height="23" viewBox="0 0 26 23" fill="none" stroke="#444" stroke-width="2" stroke-linecap="round" stroke-linejoin="round"><path d="M8.5 6.2 V3.4 Q8.5 1.6 10.3 1.6 H21.8 Q23.6 1.6 23.6 3.4 V16.4 Q23.6 17.6 22.4 17.6 H21.6"/><path d="M16 17.6 H9.6"/><path d="M8.5 6.2 H6 Q5 6.2 4.5 7.2 L2.2 11.6 Q1.6 12.6 1.6 13.6 V16.4 Q1.6 17.6 2.8 17.6 H4.4"/><path d="M8.5 6.2 V11.4"/><circle cx="7" cy="18.4" r="2.5"/><circle cx="18.8" cy="18.4" r="2.5"/></svg>
<div class="t " style="left:3629px;top:971.9px;font-size:24.5px;line-height:34px;color:#333;">0</div>
<div class="b" style="left:2735px;top:1055px;width:43px;height:42px;background:linear-gradient(180deg,#f2fbff,#a9ddfa);border:1.5px solid #43b0ea"></div>
<div class="t " style="left:2756.5px;transform:translateX(-50%);top:1059.5px;font-size:24px;line-height:34px;color:#2aa5ea;">9</div>
<svg style="left:2800px;top:1044.3px;overflow:hidden;border-radius:6px" width="63" height="63" viewBox="0 0 63 63"><defs><linearGradient id="t9" x1="0" y1="0" x2="0" y2="1"><stop offset="0" stop-color="#fff"/><stop offset=".7" stop-color="#f5f3f8"/><stop offset=".86" stop-color="#e0dde6"/><stop offset="1" stop-color="#ebe9f0"/></linearGradient><linearGradient id="t9b" x1="0" y1="0" x2="1" y2="0"><stop offset="0" stop-color="#97cfbd"/><stop offset=".5" stop-color="#aadccb"/><stop offset="1" stop-color="#86c2af"/></linearGradient></defs><rect width="63" height="63" fill="url(#t9)"/><g filter="url(#bl)"><path d="M40 12 C47 6 52 14 45 19" fill="none" stroke="#cfcfd2" stroke-width="1.8"/><path d="M25 20 C19 24 19 30 19 34 V52 Q19 56 23 56 H40 Q44 56 44 52 V34 C44 30 44 24 38 20 Z" fill="url(#t9b)"/><rect x="24" y="10" width="15" height="11" rx="2.5" fill="#9dd3c1"/><path d="M29 46 C29 40 34 40 34 46 C36 50 27 50 29 46Z" fill="#eef8f4"/><path d="M29.5 42 L29 36 M33.5 42 L34 36" stroke="#eef8f4" stroke-width="1.6"/></g></svg>
<div class="t " style="left:2886px;top:1036.8px;font-size:27.6px;line-height:39px;color:#222;">Pokokxxx123...</div>
<div class="t " style="left:2886px;top:1079.8px;font-size:25.6px;line-height:36px;color:#9a9aa3;">company nam...</div>
<svg style="left:3112px;top:1064.3000000000002px" width="24" height="23" viewBox="0 0 24 23" fill="none" stroke="#444" stroke-width="2" stroke-linecap="round" stroke-linejoin="round"><path d="M4 1.4 H20 Q21.6 1.4 21.7 3 L22.5 19.5 Q22.6 21.4 20.6 21.4 H3.4 Q1.4 21.4 1.5 19.5 L2.3 3 Q2.4 1.4 4 1.4 Z"/><path d="M7.3 6 C8 10.6 16 10.6 16.7 6"/></svg>
<div class="t " style="left:3145px;top:1060.3px;font-size:24px;line-height:34px;color:#222;font-weight:700;">1</div>
<svg style="left:3272.5px;top:1063.8000000000002px" width="25" height="25" viewBox="0 0 25 25"><circle cx="12.5" cy="12.5" r="10.9" fill="none" stroke="#444" stroke-width="2"/><text x="12.5" y="16.2" text-anchor="middle" font-size="10.5" font-weight="700" fill="#444" letter-spacing="-.4">RM</text></svg>
<div class="t " style="left:3308px;top:1060.3px;font-size:24.5px;line-height:34px;color:#333;letter-spacing:1.1px;">99.00</div>
<svg style="left:3434.5px;top:1064.3000000000002px" width="25" height="23" viewBox="0 0 25 23" fill="none" stroke="#444" stroke-width="2" stroke-linecap="round" stroke-linejoin="round"><path d="M1.5 8.2 V5 Q1.5 1.4 5 1.4 H19.5 Q23 1.4 23 5 V8.2 Z"/><path d="M2.8 8.4 V18.8 Q2.8 21.4 5.4 21.4 H19.2 Q21.8 21.4 21.8 18.8 V8.4"/><path d="M14.5 16.6 H18.2"/></svg>
<div class="t " style="left:3469px;top:1060.3px;font-size:24.5px;line-height:34px;color:#333;letter-spacing:1px;">501</div>
<svg style="left:3594.5px;top:1064.3000000000002px" width="26" height="23" viewBox="0 0 26 23" fill="none" stroke="#444" stroke-width="2" stroke-linecap="round" stroke-linejoin="round"><path d="M8.5 6.2 V3.4 Q8.5 1.6 10.3 1.6 H21.8 Q23.6 1.6 23.6 3.4 V16.4 Q23.6 17.6 22.4 17.6 H21.6"/><path d="M16 17.6 H9.6"/><path d="M8.5 6.2 H6 Q5 6.2 4.5 7.2 L2.2 11.6 Q1.6 12.6 1.6 13.6 V16.4 Q1.6 17.6 2.8 17.6 H4.4"/><path d="M8.5 6.2 V11.4"/><circle cx="7" cy="18.4" r="2.5"/><circle cx="18.8" cy="18.4" r="2.5"/></svg>
<div class="t " style="left:3629px;top:1060.3px;font-size:24.5px;line-height:34px;color:#333;">0</div>
<div class="b" style="left:2735px;top:1143px;width:43px;height:42px;background:linear-gradient(180deg,#f2fbff,#a9ddfa);border:1.5px solid #43b0ea"></div>
<div class="t " style="left:2756.5px;transform:translateX(-50%);top:1147.5px;font-size:24px;line-height:34px;color:#2aa5ea;">10</div>
<svg style="left:2800px;top:1132.7px;overflow:hidden;border-radius:6px" width="63" height="63" viewBox="0 0 63 63"><rect width="63" height="63" fill="#dcd7d0"/><g filter="url(#bl)"><path d="M26 0 H63 V26 H26 Z" fill="#e3e0db"/><path d="M0 0 H24 L18 28 L0 30 Z" fill="#eee9e2"/><path d="M10 0 H22 L20 22 L12 24 Z" fill="#d9cfc2"/><path d="M34 26 H63 V63 H44 Z" fill="#c68b52"/><path d="M40 34 L63 30 M42 46 L63 42" stroke="#b97c45" stroke-width="1.5"/><path d="M0 30 L16 24 L24 40 L0 58 Z" fill="#1f1f22"/><path d="M0 52 L38 44 L50 63 H0 Z" fill="#8b908f"/><path d="M26 46 L46 44 L50 60 L28 61 Z" fill="#efefef"/><path d="M30 57 H46" stroke="#333" stroke-width="1.5"/><path d="M9 32 C20 30 40 27 50 24 C52 38 38 52 24 50 C15 48 10 42 9 32 Z" fill="#c9482a"/><path d="M14 36 C24 36 38 33 46 29" stroke="#b53c20" stroke-width="1.5" fill="none"/><path d="M47 24 C52 22 52 28 49 30" stroke="#b9391f" stroke-width="2" fill="none"/><path d="M18 18 L30 22 L34 30 L24 34 L16 26 Z" fill="#e6bda1"/></g></svg>
<div class="t " style="left:2886px;top:1125.2px;font-size:27.6px;line-height:39px;color:#222;">Pokokxxx123...</div>
<div class="t " style="left:2886px;top:1168.2px;font-size:25.6px;line-height:36px;color:#9a9aa3;">company nam...</div>
<svg style="left:3112px;top:1152.7px" width="24" height="23" viewBox="0 0 24 23" fill="none" stroke="#444" stroke-width="2" stroke-linecap="round" stroke-linejoin="round"><path d="M4 1.4 H20 Q21.6 1.4 21.7 3 L22.5 19.5 Q22.6 21.4 20.6 21.4 H3.4 Q1.4 21.4 1.5 19.5 L2.3 3 Q2.4 1.4 4 1.4 Z"/><path d="M7.3 6 C8 10.6 16 10.6 16.7 6"/></svg>
<div class="t " style="left:3145px;top:1148.7px;font-size:24px;line-height:34px;color:#222;font-weight:700;">1</div>
<svg style="left:3272.5px;top:1152.2px" width="25" height="25" viewBox="0 0 25 25"><circle cx="12.5" cy="12.5" r="10.9" fill="none" stroke="#444" stroke-width="2"/><text x="12.5" y="16.2" text-anchor="middle" font-size="10.5" font-weight="700" fill="#444" letter-spacing="-.4">RM</text></svg>
<div class="t " style="left:3308px;top:1148.7px;font-size:24.5px;line-height:34px;color:#333;letter-spacing:1.1px;">2.00</div>
<svg style="left:3434.5px;top:1152.7px" width="25" height="23" viewBox="0 0 25 23" fill="none" stroke="#444" stroke-width="2" stroke-linecap="round" stroke-linejoin="round"><path d="M1.5 8.2 V5 Q1.5 1.4 5 1.4 H19.5 Q23 1.4 23 5 V8.2 Z"/><path d="M2.8 8.4 V18.8 Q2.8 21.4 5.4 21.4 H19.2 Q21.8 21.4 21.8 18.8 V8.4"/><path d="M14.5 16.6 H18.2"/></svg>
<div class="t " style="left:3469px;top:1148.7px;font-size:24.5px;line-height:34px;color:#333;letter-spacing:1px;">498</div>
<svg style="left:3594.5px;top:1152.7px" width="26" height="23" viewBox="0 0 26 23" fill="none" stroke="#444" stroke-width="2" stroke-linecap="round" stroke-linejoin="round"><path d="M8.5 6.2 V3.4 Q8.5 1.6 10.3 1.6 H21.8 Q23.6 1.6 23.6 3.4 V16.4 Q23.6 17.6 22.4 17.6 H21.6"/><path d="M16 17.6 H9.6"/><path d="M8.5 6.2 H6 Q5 6.2 4.5 7.2 L2.2 11.6 Q1.6 12.6 1.6 13.6 V16.4 Q1.6 17.6 2.8 17.6 H4.4"/><path d="M8.5 6.2 V11.4"/><circle cx="7" cy="18.4" r="2.5"/><circle cx="18.8" cy="18.4" r="2.5"/></svg>
<div class="t " style="left:3629px;top:1148.7px;font-size:24.5px;line-height:34px;color:#333;">0</div>
</div>
<div class="b" style="left:2710px;top:1244px;width:1078px;height:614.5px;background:#fff"></div>
<div class="t " style="left:2734px;top:1268.5px;font-size:32px;line-height:45px;color:#222;font-weight:600;">ประเภท <span style="-webkit-text-stroke:.4px #fff;letter-spacing:0">Hot Sales Top5</span></div>
<svg style="left:3748px;top:1283px" width="23" height="18" viewBox="0 0 23 18" fill="none" stroke="#333" stroke-width="1.8" stroke-linecap="round" stroke-linejoin="round"><path d="M1 6.5 H21.5 L15.5 1"/><path d="M22 11.5 H1.5 L7.5 17"/></svg>
<div class="b" style="left:2735px;top:1346px;width:1029px;height:51px;background:#fff;border:1.5px solid #e5e5e5"></div>
<div class="t " style="left:2752px;top:1354px;font-size:24.7px;line-height:35px;color:#333;max-width:982px;overflow:hidden;">จัดอันดับตามจำนวนการขาย <span style="letter-spacing:.8px">SKU Merchant</span> ที่มีผล</div>
<svg style="left:3741.5px;top:1369.6px" width="8" height="5.6" viewBox="0 0 10 7"><path d="M0 0 H10 L5 7 Z" fill="#222"/></svg>
<div class="b" style="left:2735px;top:1419px;width:36px;height:35px;background:linear-gradient(180deg,#fffaf0,#ffeec8);border:1.5px solid #f6cf5f"></div>
<div class="t " style="left:2753.0px;transform:translateX(-50%);top:1422.5px;font-size:21px;line-height:29px;color:#f2a52a;">1</div>
<div class="t " style="left:2800px;top:1416.5px;font-size:28px;line-height:39px;color:#222;">ไม่มีหมวดหมู่</div>
<svg style="left:2801px;top:1463.5px" width="24" height="23" viewBox="0 0 24 23" fill="none" stroke="#444" stroke-width="2" stroke-linecap="round" stroke-linejoin="round"><path d="M4 1.4 H20 Q21.6 1.4 21.7 3 L22.5 19.5 Q22.6 21.4 20.6 21.4 H3.4 Q1.4 21.4 1.5 19.5 L2.3 3 Q2.4 1.4 4 1.4 Z"/><path d="M7.3 6 C8 10.6 16 10.6 16.7 6"/></svg>
<div class="t " style="left:2836px;top:1459px;font-size:24px;line-height:34px;color:#222;font-weight:700;letter-spacing:.5px;">12</div>
<svg style="left:3043px;top:1463.0px" width="25" height="25" viewBox="0 0 25 25"><circle cx="12.5" cy="12.5" r="10.9" fill="none" stroke="#444" stroke-width="2"/><text x="12.5" y="16.2" text-anchor="middle" font-size="10.5" font-weight="700" fill="#444" letter-spacing="-.4">RM</text></svg>
<div class="t " style="left:3078px;top:1459px;font-size:24.6px;line-height:34px;color:#333;letter-spacing:1.1px;">806.33</div>
<svg style="left:3317px;top:1463.5px" width="25" height="23" viewBox="0 0 25 23" fill="none" stroke="#444" stroke-width="2" stroke-linecap="round" stroke-linejoin="round"><path d="M1.5 8.2 V5 Q1.5 1.4 5 1.4 H19.5 Q23 1.4 23 5 V8.2 Z"/><path d="M2.8 8.4 V18.8 Q2.8 21.4 5.4 21.4 H19.2 Q21.8 21.4 21.8 18.8 V8.4"/><path d="M14.5 16.6 H18.2"/></svg>
<div class="t " style="left:3352px;top:1459px;font-size:24.6px;line-height:34px;color:#333;letter-spacing:1px;">--</div>
<svg style="left:3558px;top:1463.5px" width="26" height="23" viewBox="0 0 26 23" fill="none" stroke="#444" stroke-width="2" stroke-linecap="round" stroke-linejoin="round"><path d="M8.5 6.2 V3.4 Q8.5 1.6 10.3 1.6 H21.8 Q23.6 1.6 23.6 3.4 V16.4 Q23.6 17.6 22.4 17.6 H21.6"/><path d="M16 17.6 H9.6"/><path d="M8.5 6.2 H6 Q5 6.2 4.5 7.2 L2.2 11.6 Q1.6 12.6 1.6 13.6 V16.4 Q1.6 17.6 2.8 17.6 H4.4"/><path d="M8.5 6.2 V11.4"/><circle cx="7" cy="18.4" r="2.5"/><circle cx="18.8" cy="18.4" r="2.5"/></svg>
<div class="t " style="left:3592px;top:1459px;font-size:24.6px;line-height:34px;color:#333;letter-spacing:1px;">--</div>
<div class="b" style="left:2735px;top:1507px;width:36px;height:35px;background:linear-gradient(180deg,#fffaf0,#ffeec8);border:1.5px solid #f6cf5f"></div>
<div class="t " style="left:2753.0px;transform:translateX(-50%);top:1510.5px;font-size:21px;line-height:29px;color:#f2a52a;">2</div>
<div class="t " style="left:2800px;top:1504.5px;font-size:28px;line-height:39px;color:#222;">bag</div>
<svg style="left:2801px;top:1551.5px" width="24" height="23" viewBox="0 0 24 23" fill="none" stroke="#444" stroke-width="2" stroke-linecap="round" stroke-linejoin="round"><path d="M4 1.4 H20 Q21.6 1.4 21.7 3 L22.5 19.5 Q22.6 21.4 20.6 21.4 H3.4 Q1.4 21.4 1.5 19.5 L2.3 3 Q2.4 1.4 4 1.4 Z"/><path d="M7.3 6 C8 10.6 16 10.6 16.7 6"/></svg>
<div class="t " style="left:2836px;top:1547px;font-size:24px;line-height:34px;color:#222;font-weight:700;letter-spacing:.5px;">1</div>
<svg style="left:3043px;top:1551.0px" width="25" height="25" viewBox="0 0 25 25"><circle cx="12.5" cy="12.5" r="10.9" fill="none" stroke="#444" stroke-width="2"/><text x="12.5" y="16.2" text-anchor="middle" font-size="10.5" font-weight="700" fill="#444" letter-spacing="-.4">RM</text></svg>
<div class="t " style="left:3078px;top:1547px;font-size:24.6px;line-height:34px;color:#333;letter-spacing:1.1px;">15.07</div>
<svg style="left:3317px;top:1551.5px" width="25" height="23" viewBox="0 0 25 23" fill="none" stroke="#444" stroke-width="2" stroke-linecap="round" stroke-linejoin="round"><path d="M1.5 8.2 V5 Q1.5 1.4 5 1.4 H19.5 Q23 1.4 23 5 V8.2 Z"/><path d="M2.8 8.4 V18.8 Q2.8 21.4 5.4 21.4 H19.2 Q21.8 21.4 21.8 18.8 V8.4"/><path d="M14.5 16.6 H18.2"/></svg>
<div class="t " style="left:3352px;top:1547px;font-size:24.6px;line-height:34px;color:#333;letter-spacing:1px;">199</div>
<svg style="left:3558px;top:1551.5px" width="26" height="23" viewBox="0 0 26 23" fill="none" stroke="#444" stroke-width="2" stroke-linecap="round" stroke-linejoin="round"><path d="M8.5 6.2 V3.4 Q8.5 1.6 10.3 1.6 H21.8 Q23.6 1.6 23.6 3.4 V16.4 Q23.6 17.6 22.4 17.6 H21.6"/><path d="M16 17.6 H9.6"/><path d="M8.5 6.2 H6 Q5 6.2 4.5 7.2 L2.2 11.6 Q1.6 12.6 1.6 13.6 V16.4 Q1.6 17.6 2.8 17.6 H4.4"/><path d="M8.5 6.2 V11.4"/><circle cx="7" cy="18.4" r="2.5"/><circle cx="18.8" cy="18.4" r="2.5"/></svg>
<div class="t " style="left:3592px;top:1547px;font-size:24.6px;line-height:34px;color:#333;letter-spacing:1px;">0</div>
<div class="b" style="left:3749px;top:1807px;width:54px;height:54px;border-radius:50%;background:linear-gradient(140deg,#7d49c2 5%,#6a58cc 45%,#4a72dc 95%);box-shadow:0 4px 14px rgba(90,90,160,.28),0 0 0 1px rgba(235,235,255,.6)"></div>
<svg style="left:3762px;top:1822px" width="26" height="24" viewBox="0 0 26 24"><path d="M2.6 14 V5.2 Q2.6 2.7 5.1 2.7 H19" fill="none" stroke="#fff" stroke-width="2.2" stroke-linecap="round"/><rect x="6.4" y="6" width="17.2" height="12.5" rx="2.2" fill="#fff"/><path d="M16.6 18 L20.3 21.8 L20.3 18 Z" fill="#fff"/></svg>
</body></html>
